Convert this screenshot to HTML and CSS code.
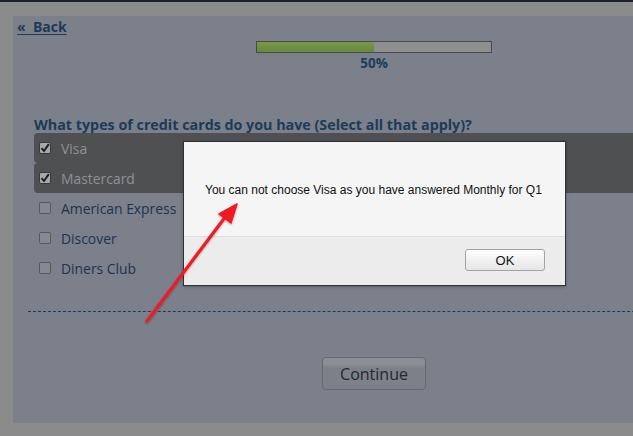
FILE: index.html
```html
<!DOCTYPE html>
<html>
<head>
<meta charset="utf-8">
<link rel="stylesheet" href="styles.css">
</head>
<body>
<div class="page">
  <a class="back" href="#">«&nbsp;&nbsp;Back</a>
  <div class="progress">
    <div class="bar"><div class="fill" style="width:50%"></div></div>
    <div class="pct">50%</div>
  </div>
  <div class="question">What types of credit cards do you have (Select all that apply)?</div>
  <ul class="options">
    <li class="opt checked"><span class="cb"><svg viewBox="0 0 12 12" width="12" height="12"><path d="M2.5 6.2 L5 9 L9.8 2.2" fill="none" stroke="#1e1e1e" stroke-width="2"/></svg></span>Visa</li>
    <li class="opt checked"><span class="cb"><svg viewBox="0 0 12 12" width="12" height="12"><path d="M2.5 6.2 L5 9 L9.8 2.2" fill="none" stroke="#1e1e1e" stroke-width="2"/></svg></span>Mastercard</li>
    <li class="opt"><span class="cb"></span>American Express</li>
    <li class="opt"><span class="cb"></span>Discover</li>
    <li class="opt"><span class="cb"></span>Diners Club</li>
  </ul>
  <div class="divider"></div>
  <div class="actions"><button class="continue">Continue</button></div>
</div>

<div class="dialog">
  <div class="dialog-body">You can not choose Visa as you have answered Monthly for Q1</div>
  <div class="dialog-foot"><button class="ok">OK</button></div>
</div>

<svg class="arrow" width="633" height="436" viewBox="0 0 633 436">
  <defs>
    <filter id="sh" x="-20%" y="-20%" width="140%" height="140%">
      <feDropShadow dx="0" dy="1" stdDeviation="1" flood-color="#000" flood-opacity="0.35"/>
    </filter>
  </defs>
  <g filter="url(#sh)">
    <line x1="147" y1="321" x2="226" y2="216" stroke="#ee1c24" stroke-width="3.2" stroke-linecap="round"/>
    <polygon points="237,204 219,214 231,223" fill="#ee1c24" stroke="#ee1c24" stroke-width="1.5" stroke-linejoin="round"/>
  </g>
</svg>
</body>
</html>
```

FILE: styles.css
```css
html, body {
  margin: 0;
  padding: 0;
  overflow: hidden;
}
body {
  width: 633px;
  height: 436px;
  background: #8b8b8b;
  border-top: 2px solid #1b2030;
  box-sizing: border-box;
  position: relative;
  font-family: "Open Sans", "DejaVu Sans", sans-serif;
}
.page {
  margin: 14px 0 0 13px;
  width: 722px;
  height: 407px;
  background: #7b808a;
  box-sizing: border-box;
  padding-top: 2px;
  display: flex;
  flex-direction: column;
}
.back {
  align-self: flex-start;
  margin-left: 4px;
  color: #1c3b5a;
  font-weight: bold;
  font-size: 14px;
  line-height: 18px;
  text-decoration: underline;
  text-underline-offset: 2px;
}
.progress {
  display: flex;
  flex-direction: column;
  align-items: center;
  margin-top: 5px;
}
.bar {
  width: 236px;
  height: 12px;
  box-sizing: border-box;
  border: 1px solid #45484d;
  background: #8f8f8f;
}
.fill {
  height: 100%;
  background: linear-gradient(#789a48, #68873a);
}
.pct {
  color: #1c3b5a;
  font-weight: bold;
  font-size: 13.5px;
  line-height: 18px;
  margin-top: 1px;
}
.question {
  margin: 44px 0 0 21px;
  color: #1c3b5a;
  font-weight: bold;
  font-size: 14.3px;
  line-height: 17px;
  white-space: nowrap;
}
.options {
  list-style: none;
  margin: 0 0 0 21px;
  padding: 0;
}
.opt {
  height: 30px;
  display: flex;
  align-items: center;
  padding-left: 5px;
  color: #1d3350;
  font-size: 13.9px;
}
.opt.checked {
  background: #4f5052;
  color: #8e9196;
  border-radius: 4px 0 0 4px;
}
.cb {
  width: 12px;
  height: 12px;
  box-sizing: border-box;
  border: 1px solid #55595f;
  border-radius: 2px;
  background: #858a92;
  margin-right: 10px;
  display: flex;
}
.checked .cb {
  background: #a7a8aa;
  border-color: #3a3a3a;
}
.cb svg {
  margin: -1px;
}
.divider {
  margin: 28px 0 0 15px;
  border-top: 1px dashed #1c3b5a;
}
.actions {
  display: flex;
  justify-content: center;
  margin-top: 45px;
}
.continue {
  width: 104px;
  height: 33px;
  border: 1px solid #656a72;
  border-radius: 4px;
  background: linear-gradient(#8a8e95 0, #8a8e95 6px, #7c8189 10px, #7b808a 100%);
  color: #23272d;
  font-family: "Open Sans", "DejaVu Sans", sans-serif;
  font-size: 16px;
  padding: 0;
  padding-top: 1px;
}
.dialog {
  position: absolute;
  left: 183px;
  top: 139px;
  width: 383px;
  height: 145px;
  box-sizing: border-box;
  border: 1px solid #2e3034;
  background: #f5f5f5;
  display: flex;
  flex-direction: column;
  font-family: "Liberation Sans", Arial, sans-serif;
  box-shadow: 0 1px 3px rgba(0,0,0,0.25);
}
.dialog-body {
  height: 95px;
  box-sizing: border-box;
  padding: 41px 0 0 21px;
  font-size: 12px;
  color: #111;
  border-bottom: 1px solid #dcdcdc;
}
.dialog-foot {
  flex: 1;
  background: #ececec;
  display: flex;
  justify-content: flex-end;
  align-items: flex-start;
  padding: 12px 20px 0 0;
}
.ok {
  width: 80px;
  height: 22px;
  border: 1px solid #a3a3a3;
  border-radius: 3px;
  background: linear-gradient(#ffffff, #f1f1f1 50%, #e6e6e6);
  font-family: "Liberation Sans", Arial, sans-serif;
  font-size: 13px;
  color: #111;
  padding: 0;
}
.arrow {
  position: absolute;
  left: 0;
  top: -2px;
  pointer-events: none;
}
```
